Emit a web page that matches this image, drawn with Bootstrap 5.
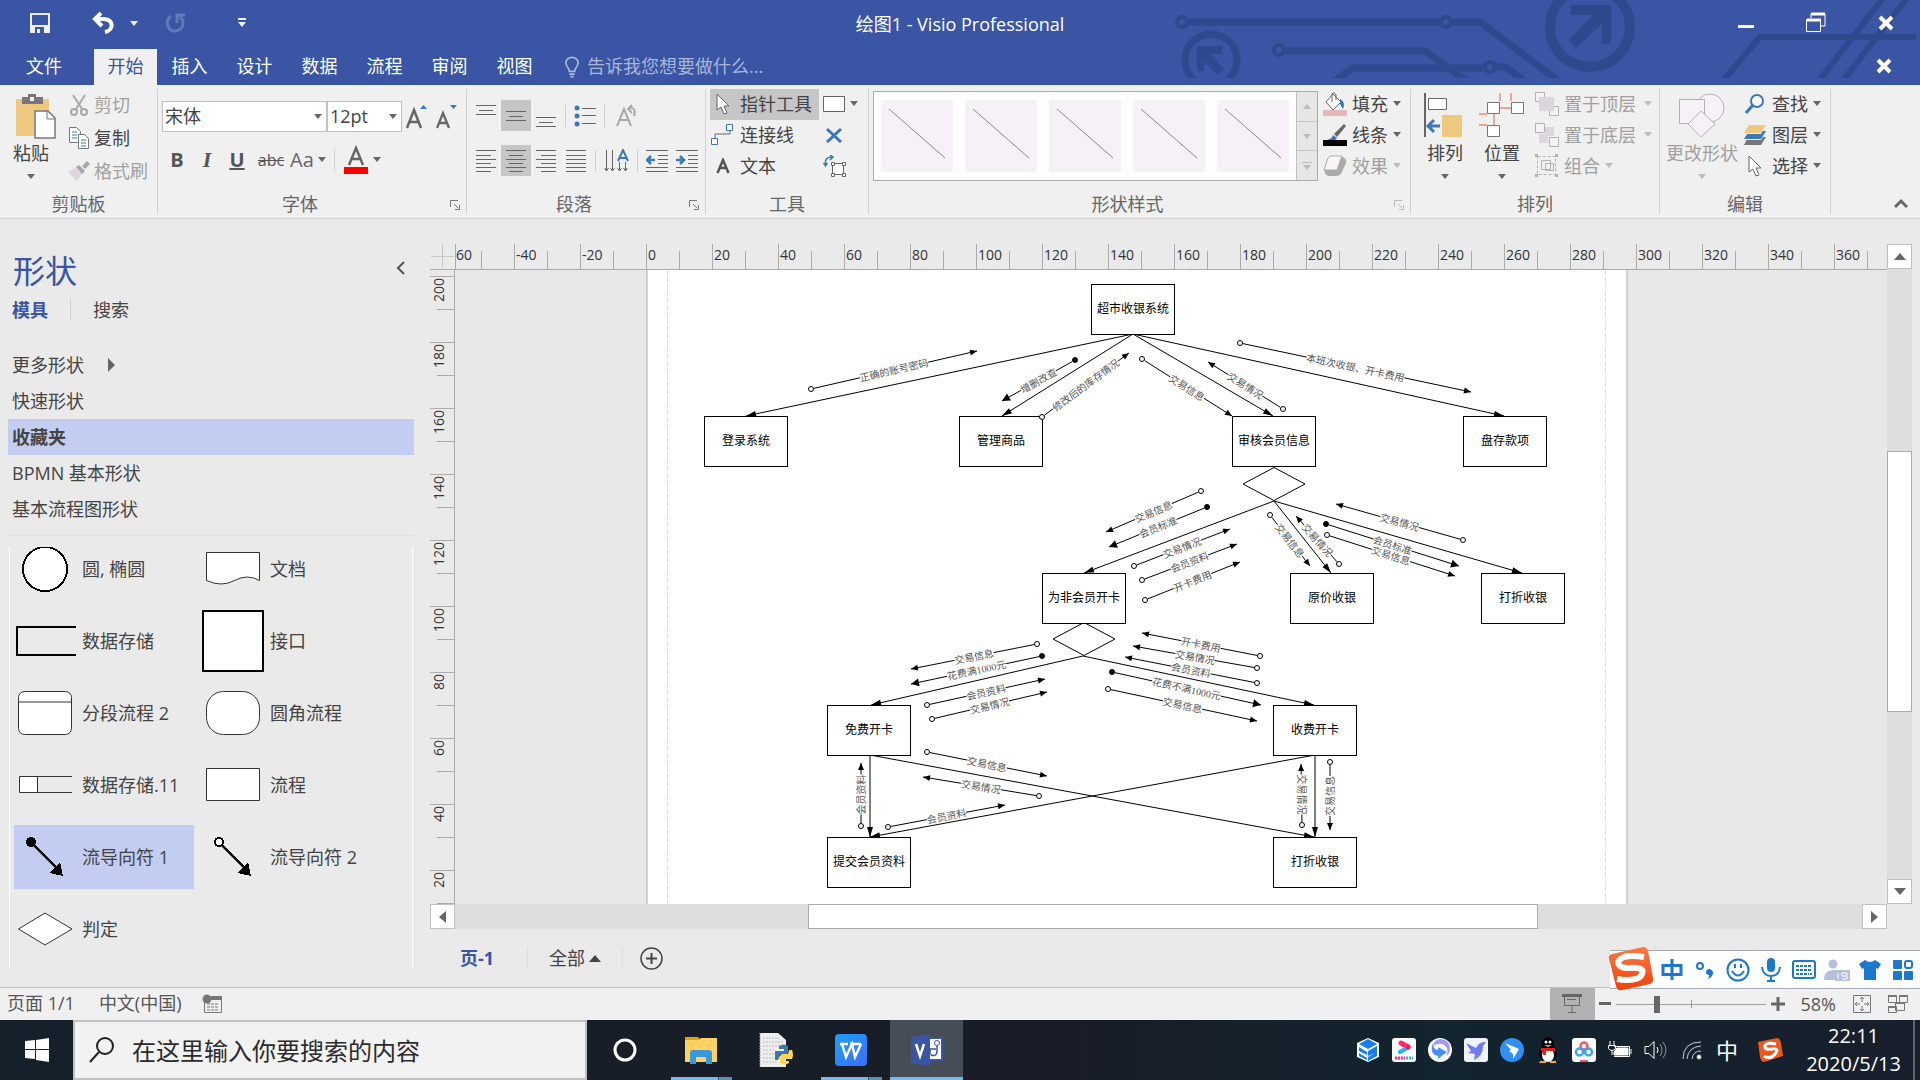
<!DOCTYPE html>
<html lang="zh-CN">
<head>
<meta charset="utf-8">
<meta name="viewport" content="width=device-width, initial-scale=1">
<title>绘图1 - Visio Professional</title>
<link href="https://cdn.jsdelivr.net/npm/bootstrap@5.3.0/dist/css/bootstrap.min.css" rel="stylesheet">
<style>
body{font-family:"Open Sans","Noto Sans CJK SC",sans-serif;font-size:18px;line-height:24px;color:#444;background:#eaeaea}
button{font:inherit;color:inherit;background:none;border:0;padding:0;white-space:nowrap}
svg{display:block;flex:none}
a{color:inherit;text-decoration:none}
.window{height:100vh;min-height:720px}
.minw0{min-width:0}
.minh0{min-height:0}
/* title bar and tabs */
.topband{background:#3955a3;color:#fff}
.deco{right:0;top:0;pointer-events:none}
.titlerow{height:49px}
.wtitle{line-height:18px;padding-top:15px}
.qat{left:30px;top:12px}
.qat .undo{margin-left:42px}
.qat .undo-more{margin-left:16px}
.qat .more{margin-left:52px}
.wbtns{right:26px;top:12px;gap:52px}
.tabrow{height:36px}
.tabrow a{width:65px;text-align:center;line-height:34px;height:36px}
.tabrow a.file-tab{width:88px}
.tabrow a.on{background:#f0f0f0;color:#3955a3;width:63px;margin-left:6px}
.tell{color:#a9b6d8;margin-left:18px}
.tell input{background:none;border:0;color:inherit;width:190px;padding:0 0 2px;outline:0}
.tell input::placeholder{color:#a9b6d8;opacity:1}
/* ribbon */
.ribbon{height:134px;background:#f0f0f0;border-bottom:1px solid #d0d0d0}
.rgroup{position:relative;height:125px;margin-top:4px;border-right:1px solid #d2d2d2;flex:none;display:flex;flex-direction:column}
.rbody{height:102px;flex:none;display:flex}
.rname{text-align:center;color:#666;line-height:27px}
.w-clip{width:158px}.w-font{width:309px}.w-para{width:239px}.w-tool{width:163px}.w-style{width:542px}.w-arr{width:249px}.w-edit{width:171px}
.launch{position:absolute;right:6px;bottom:4px}
.tri{display:inline-block;flex:none;border:4px solid transparent;border-top:5px solid #666;border-bottom:0}
.dim{color:#a0a0a0}
.dim .tri{border-top-color:#bdbdbd}
.cmd{height:31px;display:flex;align-items:center;padding-bottom:2px}
.cmd .ic{width:26px;margin-right:4px;display:flex;justify-content:center}
.cmd .tri{margin-left:5px}
.clip .bigcmd{margin-left:13px}
.clip .cmd{height:33px}
.clip .cmd .ic{width:20px;margin-right:5px}
.toolcol{width:109px}
.hl{background:#c6c6c6}
.bigcmd{display:flex;flex-direction:column;align-items:center;padding-top:4px}
.bigcmd .ic{height:48px}
.bigcmd .tri{margin-top:9px}
.arr .bigcmd{margin-left:13px}
.arr .arrcol{margin-left:9px}
.edit .bigcmd{margin-left:6px}
.rstack{flex-direction:column;padding:12px 0 0 4px;gap:12px}
.para.rstack{padding-top:11px;gap:14px}
.rrow{height:31px;display:flex;align-items:center}
.rrow button{height:31px;display:flex;align-items:center;justify-content:center}
.para button{width:30px}
.para .wide{width:33px}
.fmt{font-size:20px;color:#555}
.fmt button{width:30px}
.fmt .ital{font-family:"Liberation Serif",serif;font-size:22px}
.fmt .strike{font-size:16px;text-decoration:line-through}
.fmt .auto{width:auto;color:#666}
.vsep{width:1px;height:22px;background:#d0d0d0;margin:0 4px;flex:none}
.fsel{border:1px solid #c0c0c0;border-radius:0;height:31px;padding:0 2px;font-size:18px;color:#444;background-color:#fff;background-size:8px 5px;background-position:right 4px center;width:75px;
--bs-form-select-bg-img:url("data:image/svg+xml,%3csvg xmlns='http://www.w3.org/2000/svg' viewBox='0 0 8 5'%3e%3cpath d='M0 0h8L4 5z' fill='%23666'/%3e%3c/svg%3e")}
.fsel.face{width:165px}
.gallery{height:90px;border:1px solid #ababab;background:#fff;padding:0 0 0 7px;margin-top:2px}
.gallery .tile{background:#f5f1f7;width:72px;height:72px;margin-right:12px}
.gscroll{width:21px;background:#e6e6e6;border-left:1px solid #c0c0c0;margin-left:-5px}
.gscroll button{flex:1;border-bottom:1px solid #c8c8c8;display:flex;align-items:center;justify-content:center}
.gscroll button:last-child{border-bottom:0}
/* shapes pane */
.pane{width:430px;flex:none;padding:31px 16px 0 8px}
.pane h1{font-size:32px;line-height:42px;color:#3955a3;margin:0 0 0 5px;font-weight:400}
.pane .fold{padding:0 9px 6px 0}
.ptabs{height:36px;padding-left:4px;margin-bottom:19px}
.ptabs .on{color:#3955a3;font-weight:700}
.ptabs .vsep{margin:0 22px}
.plist{border-bottom:1px solid #dedede;padding-bottom:8px}
.plist a{display:flex;align-items:center;height:36px;padding-left:4px}
.plist a.on,.stencil .on{background:#c2cdf1}
.plist a.on{font-weight:700}
.sten-wrap{border-left:1px solid #fff;border-right:1px solid #fff;overflow:hidden;height:421px;margin:11px 0 0 1px;width:404px}
.stencil{display:grid;grid-template-columns:180px 180px;gap:8px;margin:-10px 0 0 4px}
.stencil button{display:flex;align-items:center;height:64px;text-align:left}
.stencil svg{margin-right:6px}
/* rulers */
.hr-row{height:26px;margin-top:25px}
.corner{width:25px;border-bottom:1px solid #ababab}
.hruler{border-left:1px solid #ababab;border-bottom:1px solid #ababab;overflow:hidden;font-size:14px;line-height:21px;color:#333}
.hruler>div{display:flex;width:1500px}
.hruler span,.vruler span{flex:none;display:block}
.hruler span{width:66px;height:26px;padding-left:2px;background:linear-gradient(#ababab,#ababab) 0 0/1px 100% no-repeat,linear-gradient(#ababab,#ababab) 33px 7px/1px 100% no-repeat}
.hruler span:first-child{width:58px;padding-left:0;background-position:-1px 0,25px 7px}
.vruler{width:25px;border-right:1px solid #ababab;overflow:hidden;font-size:14px;line-height:15px;color:#333;padding-top:6px}
.vruler span{height:66px;padding-top:2px;background:linear-gradient(#ababab,#ababab) 0 0/100% 1px no-repeat,linear-gradient(#ababab,#ababab) 7px 33px/100% 1px no-repeat}
.vruler i{font-style:normal;writing-mode:vertical-rl;transform:rotate(180deg);display:block;margin-left:1px}
.canvas{background:#e8e8e8;overflow:hidden;position:relative;min-width:0;min-height:0}
.canvas svg{width:100%;height:100%;position:absolute;inset:0}
.sbtn{background:#fff;border:1px solid #c0c0c0;width:25px;height:25px;display:flex;align-items:center;justify-content:center;flex:none}
.track{background:#dedede}
.thumb{background:#fff;border:1px solid #ababab}
.vbar{width:25px;margin:25px 8px 0 0;flex:none}
.vbar .gap-a{flex:182}.vbar .thumb{flex:259}.vbar .gap-b{flex:167}
.hbar{margin-right:33px;height:25px}
.hbar .gap-a{flex:353}.hbar .thumb{flex:729}.hbar .gap-b{flex:324}
.pagetabs{height:58px;padding-left:30px;gap:21px}
.pagetabs .vsep{margin:0;background:#ddd}
.pagetabs .cur{color:#3955a3;font-weight:700;padding-right:12px}
.pagetabs .plus{margin-left:-4px}
.node-t{font:12px "Noto Sans CJK SC",sans-serif;fill:#000;text-anchor:middle}
.flow-t{font:10px "Liberation Serif","Noto Sans CJK SC",serif;fill:#555;text-anchor:middle}
/* status bar */
.status{height:33px;background:#f0f0f0;border-top:1px solid #c0c0c0;color:#555;padding:0 12px 0 7px}
.status .present{width:45px;background:#b2b2b2}
.status .labels{line-height:28px;height:31px}
.status .fit{margin:0 17px}
.zoomer{appearance:none;width:150px;height:20px;margin:0 5px;background:linear-gradient(#999,#999) 75px 6px/1px 8px no-repeat,linear-gradient(#a0a0a0,#a0a0a0) 0 10px/100% 1px no-repeat}
.zoomer::-webkit-slider-thumb{appearance:none;width:6px;height:17px;background:#666}
.ime{right:0;bottom:91px;height:39px;width:310px;background:#fff;border-top:1px solid #a5a9b8;border-bottom:1px solid #a5a9b8;padding-left:45px}
.ime .slogo{left:-2px;top:-4px}
.ime button{width:33px;display:flex;justify-content:center;align-items:center}
/* taskbar */
.taskbar{height:60px;background:linear-gradient(90deg,#14202a 0,#191d27 55%,#12242f 75%,#171f2b);color:#fff}
.startb{width:73px;display:flex;align-items:center;justify-content:center}
.tsearch{width:514px;background:#f2f2f2;border:2px solid #c0c0c0;padding-left:14px;gap:17px}
.tsearch input{font-size:24px;border:0;background:none;outline:0;color:#333;padding:0;width:440px}
.tsearch input::placeholder{color:#2b2b2b;opacity:1}
.tapp{width:75px;display:flex;align-items:center;justify-content:center;position:relative;height:60px}
.tapp.home{width:76px}
.run::after{content:"";position:absolute;left:8px;right:6px;bottom:0;height:3px;background:linear-gradient(90deg,#76b9ed 0 47px,#3f5f78 47px 48px,#5a8fb8 48px)}
.act{background:#454e57;width:73px;margin-left:2px}
.act::after{left:0;right:0;background:#76b9ed}
.tray button{width:36px;height:60px;display:flex;align-items:center;justify-content:center}
.tray .lang{width:34px;font-size:22px}
.tray .sogou{width:52px}
.clock{font-size:20px;line-height:28px;width:119px;text-align:center;border-right:2px solid #5d656e;margin-right:5px;padding:2px 2px 0 0}
</style>
<script src="https://cdn.jsdelivr.net/npm/bootstrap@5.3.0/dist/js/bootstrap.bundle.min.js"></script>
</head>
<body class="overflow-hidden">
<div class="window d-flex flex-column">

<header class="topband position-relative flex-shrink-0">
  <svg class="deco position-absolute" width="745" height="78" viewBox="1175 0 745 78" fill="none" stroke="#2f498f" stroke-width="7">
    <circle cx="1182" cy="22" r="5" stroke-width="4"/><path d="M1188 22h252"/><circle cx="1446" cy="22" r="5" stroke-width="4"/><path d="M1453 22h27l80 60"/>
    <circle cx="1279" cy="50" r="5" stroke-width="4"/><path d="M1286 51h139l42 30"/>
    <path d="M1333 82l20-14h130"/><circle cx="1490" cy="67" r="5" stroke-width="4"/><path d="M1496 67h10l18 14"/>
    <circle cx="1211" cy="60" r="26"/><circle cx="1590" cy="27" r="40" stroke-width="10"/>
    <path d="M1722 82l38-45h156M1818 82l68-88M1842 82l68-88" stroke-width="6"/>
    <g fill="#2f498f" stroke="none"><path d="M1197 46h25v8h-12l14 15-7 6-13-14v10h-7z"/><path d="M1571 5h40v39h-9V24l-26 24-7-8 24-25h-22z"/></g>
  </svg>
  <div class="titlerow position-relative">
    <div class="qat position-absolute d-flex align-items-center">
      <button aria-label="保存"><svg width="20" height="21"><path d="M1 1h18v18H1z" fill="none" stroke="#f0f0f0" stroke-width="2"/><path d="M1 12h18v8H1z" fill="#f0f0f0"/><path d="M5 14h9v6H5z" fill="#3955a3"/><path d="M7 16h3v4H7z" fill="#f0f0f0"/></svg></button>
      <button class="undo" aria-label="撤消"><svg width="22" height="22" viewBox="0 0 22 22"><path d="M9 1L3 7l7 7M3 7h9c10 1 10 11 1 13" fill="none" stroke="#fff" stroke-width="4"/></svg></button>
      <button class="undo-more" aria-label="撤消历史"><svg width="8" height="5"><path d="M0 0h8L4 5z" fill="#f0f0f0"/></svg></button>
      <button class="ms-4" aria-label="恢复"><svg width="24" height="22" viewBox="0 0 24 22"><path d="M9 4c-7 5-3 16 5 15 9-2 8-11 4-14M15 11V3h8" fill="none" stroke="#6379b8" stroke-width="3"/></svg></button>
      <button class="more" aria-label="自定义快速访问工具栏"><svg width="8" height="10"><path d="M0 0h8v2H0zM0 4h8L4 9z" fill="#f0f0f0"/></svg></button>
    </div>
    <div class="wtitle text-center">绘图1 - Visio Professional</div>
    <div class="wbtns position-absolute d-flex align-items-center">
      <button aria-label="最小化"><svg width="16" height="20"><path d="M0 12h16v3H0z" fill="#fff"/></svg></button>
      <button aria-label="还原"><svg width="20" height="21" fill="none" stroke="#fff"><path d="M5 6V2h14v12h-4"/><path d="M5 2h14M1 8h14" stroke-width="3"/><path d="M.5 7.500h14v12H.5z"/></svg></button>
      <button aria-label="关闭"><svg width="16" height="16"><path d="M2 2l12 12M14 2L2 14" stroke="#fff" stroke-width="4"/></svg></button>
    </div>
  </div>
  <nav class="tabrow d-flex align-items-start position-relative">
    <a href="#" class="file-tab">文件</a><a href="#" class="on">开始</a><a href="#">插入</a><a href="#">设计</a><a href="#">数据</a><a href="#">流程</a><a href="#">审阅</a><a href="#">视图</a>
    <label class="tell d-flex align-items-center h-100"><svg width="14" height="24" viewBox="0 0 16 24" class="me-2" fill="none" stroke="#a9b6d8" stroke-width="2"><path d="M5 17c0-4-4-5-4-10a7 6 0 0 1 14 0c0 5-4 6-4 10zM5 20h6M6 23h4"/></svg><input type="text" placeholder="告诉我您想要做什么..." aria-label="告诉我您想要做什么"></label>
    <button class="ms-auto me-4 pt-2 pe-1" aria-label="关闭文档"><svg width="18" height="18"><path d="M4 3l12 12M16 3L4 15" stroke="#fff" stroke-width="4"/></svg></button>
  </nav>
</header>

<section class="ribbon d-flex flex-shrink-0 position-relative" aria-label="开始">
  <div class="rgroup w-clip"><div class="rbody clip">
    <button class="bigcmd"><span class="ic"><svg width="42" height="46" viewBox="0 0 42 46"><path d="M2 6h33v37H2z" fill="#edc87e"/><path d="M8 4h6V1h8v3h7v7H8z" fill="#777"/><path d="M16 4h4v4h-4z" fill="#f0f0f0"/><path d="M21 18h13l7 7v20H21z" fill="#fff" stroke="#777" stroke-width="1.500"/><path d="M33 18v8h8" fill="none" stroke="#777"/></svg></span><span class="pe-2">粘贴</span><i class="tri me-2"></i></button>
    <div class="ms-2 ps-1">
      <button class="cmd dim"><span class="ic"><svg width="20" height="22" fill="none" stroke="#a8a8a8" stroke-width="2"><path d="M4 1l9 14M16 1L7 15"/><circle cx="5" cy="18" r="3"/><circle cx="15" cy="18" r="3"/></svg></span>剪切</button>
      <button class="cmd"><span class="ic"><svg width="20" height="22" fill="#fff" stroke="#777"><path d="M.5 .5h7l4 4v11H.5z"/><path d="M9.500 7.500h6l4 4v10h-10z"/><path d="M3 5h5M3 8h5M3 11h5M12 13h5M12 16h5M12 19h5" stroke="#3b78b5"/></svg></span>复制</button>
      <button class="cmd dim"><span class="ic"><svg width="22" height="20"><path d="M0 11l7-4 7 5-5 8z" fill="#dcd5dc"/><path d="M8 6l3-2 6 6-3 3zM14 5l5-5 3 3-5 5z" fill="#a8a8a8"/></svg></span>格式刷</button>
    </div></div><div class="rname">剪贴板</div></div>

  <div class="rgroup w-font"><div class="rbody rstack">
    <div class="rrow">
      <select class="form-select fsel face" aria-label="字体"><option>宋体</option></select><select class="form-select fsel" aria-label="字号"><option>12pt</option></select>
      <button class="ms-1" aria-label="增大字号"><svg width="22" height="26" viewBox="0 0 22 26"><path d="M1 24L8 6l7 18M4 18h8" fill="none" stroke="#666" stroke-width="2.500"/><path d="M14 5h7l-3.500-4z" fill="#3b78b5"/></svg></button>
      <button class="ms-2" aria-label="减小字号"><svg width="22" height="26" viewBox="0 0 22 26"><path d="M1 24L7 9l6 15M3 19h8" fill="none" stroke="#666" stroke-width="2.300"/><path d="M14 1h7l-3.500 4z" fill="#3b78b5"/></svg></button>
    </div>
    <div class="rrow fmt">
      <button class="fw-bold">B</button><button class="ital fw-bold fst-italic">I</button><button class="fw-bold text-decoration-underline">U</button><button class="strike ms-1">abc</button><button class="auto ms-1">Aa<i class="tri ms-1"></i></button><span class="vsep ms-2"></span>
      <button class="auto ms-1" aria-label="字体颜色"><svg width="26" height="30" viewBox="0 0 26 30"><path d="M6 20l7-17 7 17M8 14h10" fill="none" stroke="#666" stroke-width="2.500"/><path d="M1 22h24v7H1z" fill="red"/></svg><i class="tri ms-1"></i></button>
    </div></div><div class="rname pe-4">字体</div>
    <button class="launch" aria-label="字体设置"><svg width="10" height="10" fill="none" stroke="#777"><path d="M.5 7V.5H8M4 4l4 4M9.500 5v4.500H5"/></svg></button></div>

  <div class="rgroup w-para"><div class="rbody para rstack">
    <div class="rrow">
      <button aria-label="顶端对齐"><svg width="20" height="24" stroke="#666"><path d="M0 1.500h20M3 6.500h14M0 10.500h20"/></svg></button>
      <button class="hl" aria-label="中部对齐"><svg width="20" height="24" stroke="#666"><path d="M0 7.500h20M3 12.500h14M0 16.500h20"/></svg></button>
      <button aria-label="底端对齐"><svg width="20" height="24" stroke="#666"><path d="M0 13.500h20M3 18.500h14M0 22.500h20"/></svg></button>
      <span class="vsep"></span>
      <button aria-label="项目符号"><svg width="22" height="24" stroke="#666"><path d="M8 4.500h14M8 11.500h14M8 19.500h14"/><g fill="#3b78b5" stroke="none"><circle cx="3" cy="4" r="2.500"/><circle cx="3" cy="12" r="2.500"/><circle cx="3" cy="20" r="2.500"/></g></svg></button>
      <span class="vsep"></span>
      <button class="wide" aria-label="旋转文字"><svg width="22" height="24" fill="none" stroke="#aaa" stroke-width="2"><path d="M2 22L9 5l7 17M5 16h8M14 5c5-3 7 2 5 7M17 1l-4 4 4 4"/></svg></button>
    </div>
    <div class="rrow">
      <button aria-label="左对齐"><svg width="20" height="22" stroke="#666"><path d="M0 .5h20M0 5.500h15M0 9.500h20M0 13.500h15M0 17.500h20M0 21.500h15"/></svg></button>
      <button class="hl" aria-label="居中"><svg width="20" height="22" stroke="#666"><path d="M0 .5h20M3 5.500h14M0 9.500h20M3 13.500h14M0 17.500h20M3 21.500h14"/></svg></button>
      <button aria-label="右对齐"><svg width="20" height="22" stroke="#666"><path d="M0 .5h20M5 5.500h15M0 9.500h20M5 13.500h15M0 17.500h20M5 21.500h15"/></svg></button>
      <button aria-label="两端对齐"><svg width="20" height="22" stroke="#666"><path d="M0 .5h20M0 5.500h20M0 9.500h20M0 13.500h20M0 17.500h20M0 21.500h20"/></svg></button>
      <span class="vsep"></span>
      <button class="wide" aria-label="文字方向"><svg width="25" height="24" fill="none" stroke="#666"><path d="M2.500 1v21M8.500 1v21M15.500 13v9M21.500 13v9M.5 19l2 3 2-3M6.500 19l2 3 2-3M13.500 19l2 3 2-3M19.500 19l2 3 2-3"/><path d="M14 12l5-11 5 11M15 9h8" stroke="#3b78b5" stroke-width="2"/></svg></button>
      <span class="vsep"></span>
      <button aria-label="减少缩进"><svg width="22" height="22" stroke="#666"><path d="M0 .5h22M12 5.500h10M12 9.500h10M12 13.500h10M0 17.500h22M0 21.500h22"/><path d="M9 10H2M5 6l-4 4 4 4" fill="none" stroke="#3b78b5" stroke-width="2.500"/></svg></button>
      <button aria-label="增加缩进"><svg width="22" height="22" stroke="#666"><path d="M0 .5h22M12 5.500h10M12 9.500h10M12 13.500h10M0 17.500h22M0 21.500h22"/><path d="M0 10h7M4 6l4 4-4 4" fill="none" stroke="#3b78b5" stroke-width="2.500"/></svg></button>
    </div></div><div class="rname pe-4">段落</div>
    <button class="launch" aria-label="段落设置"><svg width="10" height="10" fill="none" stroke="#777"><path d="M.5 7V.5H8M4 4l4 4M9.500 5v4.500H5"/></svg></button></div>

  <div class="rgroup w-tool"><div class="rbody ps-1">
    <div class="toolcol">
      <button class="cmd hl w-100"><span class="ic"><svg width="14" height="22"><path d="M1 1v16l4-3 3 7 3-1-3-7h5z" fill="#fff" stroke="#666"/></svg></span>指针工具</button>
      <button class="cmd"><span class="ic"><svg width="24" height="22" fill="#fff" stroke="#3b78b5"><path d="M4 14v-4h15V7" fill="none" stroke="#666"/><path d="M.5 14.500h6v6h-6zM15.500 .5h6v6h-6z"/></svg></span>连接线</button>
      <button class="cmd"><span class="ic"><svg width="14" height="16"><path d="M1.500 15L7 2l5.500 13M3 10h8" fill="none" stroke="#555" stroke-width="2.500"/></svg></span>文本</button>
    </div>
    <div class="ms-1">
      <button class="cmd" aria-label="矩形"><svg width="22" height="16"><path d="M.5 .5h21v15H.5z" fill="#fff" stroke="#666"/></svg><i class="tri"></i></button>
      <button class="cmd" aria-label="连接点"><svg width="22" height="16"><path d="M4 2l14 13M18 2L4 15" stroke="#3b78b5" stroke-width="3"/></svg></button>
      <button class="cmd" aria-label="文本块"><svg width="23" height="22" fill="none" stroke="#666"><path d="M9.500 8.500h11v11h-11z" fill="#fff"/><path d="M8.500 7.500h3v3h-3zM19.500 7.500h3v3h-3zM8.500 18.500h3v3h-3zM19.500 18.500h3v3h-3z" fill="#fff"/><path d="M2.500 11V6q1-4 7-4M.5 8l2 3 2-3M7 0l3 2-3 3" stroke="#3b78b5" stroke-width="1.500"/></svg></button>
    </div></div><div class="rname">工具</div></div>

  <div class="rgroup w-style"><div class="rbody ps-1">
    <div class="gallery d-flex align-items-center">
      <button class="tile" aria-label="样式 1"><svg width="72" height="72"><path d="M8 9l56 49" stroke="#888"/></svg></button><button class="tile" aria-label="样式 2"><svg width="72" height="72"><path d="M8 9l56 49" stroke="#888"/></svg></button><button class="tile" aria-label="样式 3"><svg width="72" height="72"><path d="M8 9l56 49" stroke="#888"/></svg></button><button class="tile" aria-label="样式 4"><svg width="72" height="72"><path d="M8 9l56 49" stroke="#888"/></svg></button><button class="tile" aria-label="样式 5"><svg width="72" height="72"><path d="M8 9l56 49" stroke="#888"/></svg></button>
      <div class="gscroll d-flex flex-column h-100">
        <button aria-label="上一行"><svg width="8" height="5"><path d="M0 5h8L4 0z" fill="#bbb"/></svg></button><button aria-label="下一行"><svg width="8" height="5"><path d="M0 0h8L4 5z" fill="#bbb"/></svg></button><button aria-label="其他"><svg width="10" height="8"><path d="M0 0h10v1H0zM1 3h8L5 8z" fill="#bbb"/></svg></button>
      </div>
    </div>
    <div class="ms-1">
      <button class="cmd"><span class="ic"><svg width="24" height="24"><path d="M10 2l8 8-8 8-7-8z" fill="#fff" stroke="#666"/><path d="M9 10V2q2-3 4 1v5" fill="none" stroke="#666"/><path d="M17 7q6 3 3 10l-3-5z" fill="#3b78b5"/><path d="M0 18h24v6H0z" fill="#e6b8b7"/></svg></span>填充<i class="tri"></i></button>
      <button class="cmd"><span class="ic"><svg width="24" height="24"><path d="M21 1l2 2-9 11-3-3z" fill="#666"/><path d="M4 17q5-1 6-5l4 3q-2 4-10 2z" fill="#3b78b5"/><path d="M0 17h24v6H0z"/></svg></span>线条<i class="tri"></i></button>
      <button class="cmd dim"><span class="ic"><svg width="24" height="22"><path d="M9 2h11q4 2 3 6l-4 9q-2 4-6 4H5q-6-4-2-8z" fill="#aaa"/><path d="M8 1h11l-5 14H1L5 3q1-2 3-2z" fill="#f8f4f8" stroke="#aaa" stroke-linejoin="round"/></svg></span>效果<i class="tri"></i></button>
    </div></div><div class="rname pe-4">形状样式</div>
    <button class="launch" aria-label="形状样式设置"><svg width="10" height="10" fill="none" stroke="#bbb"><path d="M.5 7V.5H8M4 4l4 4M9.500 5v4.500H5"/></svg></button></div>

  <div class="rgroup w-arr"><div class="rbody arr">
    <button class="bigcmd"><span class="ic"><svg width="42" height="46"><path d="M1 0v44" stroke="#666" stroke-width="2"/><path d="M4.500 5.500h18v11h-18z" fill="#fff" stroke="#666"/><path d="M18 22h20v22H18z" fill="#edc87e"/><path d="M16 33H5M10 27l-6 6 6 6" fill="none" stroke="#3b78b5" stroke-width="3"/></svg></span><span>排列</span><i class="tri"></i></button>
    <button class="bigcmd"><span class="ic"><svg width="46" height="46" fill="#fff" stroke="#777"><path d="M21 0v8M32 0v8M20 15h12M0 21h8M0 32h8M15 21v12" stroke="#e0603c"/><path d="M8.500 9.500h12v11h-12zM32.500 9.500h12v11h-12zM8.500 32.500h12v11h-12z"/></svg></span><span>位置</span><i class="tri"></i></button>
    <div class="arrcol">
      <button class="cmd dim"><span class="ic"><svg width="24" height="24"><path d="M.5 .5h9v9h-9zM14.500 14.500h9v9h-9z" fill="#f5f1f7" stroke="#b5b0b5"/><path d="M4 5h15v14H4z" fill="#dcd5dc"/></svg></span>置于顶层<i class="tri ms-2"></i></button>
      <button class="cmd dim"><span class="ic"><svg width="24" height="24"><path d="M10 4h9v9h-9zM4 11h9v9H4z" fill="#dcd5dc"/><path d="M.5 .5h9v9h-9zM14.500 14.500h9v9h-9z" fill="#f5f1f7" stroke="#b5b0b5"/></svg></span>置于底层<i class="tri ms-2"></i></button>
      <button class="cmd dim"><span class="ic"><svg width="24" height="24" fill="none" stroke="#b5b0b5"><path d="M2.500 2.500h18v18h-18z" stroke-dasharray="3 2"/><path d="M6.500 6.500h9v9h-9zM10.500 9.500h8v7h-8z"/><path d="M0 0h3v3H0zM20 0h3v3h-3zM0 20h3v3H0zM20 20h3v3h-3z" fill="#b5b0b5" stroke="none"/></svg></span>组合<i class="tri"></i></button>
    </div></div><div class="rname">排列</div></div>

  <div class="rgroup w-edit"><div class="rbody edit">
    <button class="bigcmd dim"><span class="ic"><svg width="46" height="46" fill="#f5f1f7" stroke="#b5b0b5"><circle cx="31" cy="15" r="14"/><path d="M.5 6.500h25v24H.5z"/><path d="M22 18l14 13-14 13L9 31z"/></svg></span><span>更改形状</span><i class="tri"></i></button>
    <div class="ms-1">
      <button class="cmd"><span class="ic"><svg width="20" height="20"><circle cx="12" cy="7" r="6" fill="#fff" stroke="#3b78b5" stroke-width="2"/><path d="M8 11l-7 8" stroke="#3b78b5" stroke-width="3"/></svg></span>查找<i class="tri"></i></button>
      <button class="cmd"><span class="ic"><svg width="22" height="20"><path d="M4 12h18l-5 8H0z" fill="#777"/><path d="M5 6h17l-5 9H0z" fill="#f0f0f0"/><path d="M5 6h17l-5 8H0z" fill="#3b78b5"/><path d="M5 0h17l-5 9H0z" fill="#f0f0f0"/><path d="M5 0h17l-5 8H0z" fill="#edc87e"/></svg></span>图层<i class="tri"></i></button>
      <button class="cmd"><span class="ic"><svg width="14" height="22"><path d="M1 1v16l4-3 3 7 3-1-3-7h5z" fill="#fff" stroke="#666"/></svg></span>选择<i class="tri"></i></button>
    </div></div><div class="rname">编辑</div></div>
  <button class="ms-auto align-self-end me-2 pe-1 pb-1" aria-label="折叠功能区"><svg width="14" height="18"><path d="M1 11l6-6 6 6" fill="none" stroke="#666" stroke-width="3"/></svg></button>
</section>

<main class="d-flex flex-grow-1 minh0">
  <aside class="pane">
    <div class="d-flex align-items-center justify-content-between"><h1>形状</h1><button class="fold" aria-label="折叠"><svg width="9" height="14"><path d="M8 1L2 7l6 6" fill="none" stroke="#555" stroke-width="2"/></svg></button></div>
    <div class="ptabs d-flex align-items-center"><a href="#" class="on">模具</a><span class="vsep"></span><a href="#">搜索</a></div>
    <nav class="plist">
      <a href="#">更多形状<svg width="7" height="14" class="ms-4"><path d="M0 0l7 7-7 7z" fill="#666"/></svg></a><a href="#">快速形状</a><a href="#" class="on">收藏夹</a><a href="#">BPMN 基本形状</a><a href="#">基本流程图形状</a>
    </nav>
    <div class="sten-wrap"><div class="stencil">
      <button><svg width="62" height="64"><circle cx="31" cy="32" r="22" fill="#fff" stroke="#000" stroke-width="2" shape-rendering="crispEdges"/></svg>圆, 椭圆</button>
      <button><svg width="62" height="64"><path d="M4.500 15.500h53v28q-12-7-25 0t-28 0z" fill="#fff" stroke="#333"/></svg>文档</button>
      <button><svg width="62" height="64"><path d="M64 18H3v28h59" fill="none" stroke="#000" stroke-width="2"/></svg>数据存储</button>
      <button><svg width="62" height="64"><path d="M1 2h60v60H1z" fill="#fff" stroke="#000" stroke-width="2"/></svg>接口</button>
      <button><svg width="62" height="64"><rect x="4.500" y="10.500" width="53" height="43" rx="6" fill="#fff" stroke="#333"/><path d="M5 21h53" stroke="#333"/></svg>分段流程 2</button>
      <button><svg width="62" height="64"><rect x="4.500" y="10.500" width="53" height="43" rx="17" fill="#fff" stroke="#333"/></svg>圆角流程</button>
      <button><svg width="62" height="64"><path d="M5 23.500h18v16H5z" fill="#fff"/><path d="M58 23.500H5.500v16H58M23.500 23v16" fill="none" stroke="#333"/></svg>数据存储.11</button>
      <button><svg width="62" height="64"><path d="M4.500 15.500h53v32h-53z" fill="#fff" stroke="#333"/></svg>流程</button>
      <button class="on"><svg width="62" height="64" shape-rendering="crispEdges"><path d="M17 18l28 28" stroke="#777" stroke-width="2"/><path d="M17 17l28 28" stroke="#000" stroke-width="2"/><circle cx="17" cy="17" r="5"/><path d="M49 51l-13-3 10-11z"/></svg>流导向符 1</button>
      <button><svg width="62" height="64" shape-rendering="crispEdges"><path d="M17 18l28 28" stroke="#777" stroke-width="2"/><path d="M17 17l28 28" stroke="#000" stroke-width="2"/><circle cx="17" cy="17" r="4" fill="#fff" stroke="#000" stroke-width="2"/><path d="M49 51l-13-3 10-11z"/></svg>流导向符 2</button>
      <button><svg width="62" height="64"><path d="M4.500 32L31 16l27 16-27 16z" fill="#fff" stroke="#333"/></svg>判定</button>
    </div></div>
  </aside>

  <div class="flex-grow-1 d-flex flex-column minw0">
    <div class="d-flex flex-grow-1 minh0">
      <div class="flex-grow-1 d-flex flex-column minw0">
        <div class="d-flex hr-row flex-shrink-0"><div class="corner flex-shrink-0"><svg width="25" height="25" stroke="#c8c8c8"><path d="M12.500 0v24M1 12.500h23"/></svg></div><div class="hruler flex-grow-1 minw0"><div id="hr"></div></div></div>
        <div class="d-flex flex-grow-1 minh0">
          <div class="vruler flex-shrink-0" id="vr"></div>
          <div class="canvas flex-grow-1"><svg><g transform="translate(-455 -270)">
            <path d="M647 260h980v700H647z" fill="#fff" stroke="#a5adb5"/>
            <path d="M667.500 270v700M1605.500 270v700" stroke="#ddd" stroke-dasharray="5 2"/>
            <g id="dia"></g></g></svg></div>
        </div>
      </div>
      <div class="vbar d-flex flex-column">
        <button class="sbtn" aria-label="向上滚动"><svg width="12" height="7"><path d="M0 7h12L6 0z" fill="#666"/></svg></button>
        <div class="track flex-grow-1 d-flex flex-column"><div class="gap-a"></div><div class="thumb"></div><div class="gap-b"></div></div>
        <button class="sbtn" aria-label="向下滚动"><svg width="12" height="7"><path d="M0 0h12L6 7z" fill="#666"/></svg></button>
      </div>
    </div>
    <div class="hbar d-flex flex-shrink-0">
      <button class="sbtn" aria-label="向左滚动"><svg width="7" height="12"><path d="M7 0v12L0 6z" fill="#666"/></svg></button>
      <div class="track flex-grow-1 d-flex"><div class="gap-a"></div><div class="thumb"></div><div class="gap-b"></div></div>
      <button class="sbtn" aria-label="向右滚动"><svg width="7" height="12"><path d="M0 0v12l7-6z" fill="#666"/></svg></button>
    </div>
    <div class="pagetabs d-flex align-items-center flex-shrink-0">
      <a href="#" class="cur">页-1</a><span class="vsep"></span><button class="d-flex align-items-center">全部<svg width="12" height="7" class="ms-1"><path d="M0 7h12L6 0z" fill="#444"/></svg></button><span class="vsep"></span>
      <button class="plus" aria-label="插入页"><svg width="23" height="23" fill="none" stroke="#444" stroke-width="1.500"><circle cx="11.500" cy="11.500" r="10.500"/><path d="M11.500 6v11M6 11.500h11" stroke-width="2"/></svg></button>
    </div>
  </div>
</main>

<footer class="status d-flex align-items-center flex-shrink-0">
  <span class="labels">页面 1/1</span><span class="labels ms-4">中文(中国)</span>
  <button class="ms-3 ps-1" aria-label="宏"><svg width="21" height="20"><path d="M2.500 4v14.500h17V4" fill="none" stroke="#777"/><path d="M9 2h11v4H9z" fill="#777"/><circle cx="5" cy="5" r="4.500" fill="#777"/><path d="M5 10h12M5 13h12M5 16h12" stroke="#777" stroke-dasharray="3 1"/></svg></button>
  <button class="present ms-auto h-100 d-flex align-items-center justify-content-center" aria-label="演示模式"><svg width="20" height="20" fill="none" stroke="#666"><path d="M0 1.500h20" stroke-width="3"/><path d="M2.500 2v9.500h15V2M5 5.500h9M10 12v6M6 18.500h8"/></svg></button>
  <button class="ms-1" aria-label="缩小"><svg width="12" height="4"><path d="M0 0h12v3H0z" fill="#666"/></svg></button>
  <input type="range" class="zoomer" min="0" max="100" value="27" aria-label="缩放">
  <button aria-label="放大"><svg width="14" height="14"><path d="M7 0v14M0 7h14" stroke="#666" stroke-width="3"/></svg></button>
  <button class="labels ms-3">58%</button>
  <button class="fit" aria-label="适应窗口"><svg width="18" height="18" fill="none" stroke="#777"><path d="M.5 .5h17v17H.5zM9 2v5M9 11v5M2 9h5M11 9h5M7 4l2-2 2 2M7 14l2 2 2-2M4 7L2 9l2 2M14 7l2 2-2 2"/></svg></button>
  <button aria-label="切换窗口"><svg width="20" height="18" fill="#f0f0f0" stroke="#777"><path d="M.5 .5h8v7h-8zM11.500 .5h8v7h-8zM.5 11.500h8v6h-8zM7.500 7.500h9v8h-9z"/><path d="M0 1h9M11 1h9M7 8h10M0 12h7" stroke-width="2"/></svg></button>
</footer>

<footer class="taskbar d-flex flex-shrink-0">
  <button class="startb" aria-label="开始"><svg width="24" height="24" fill="#fff"><path d="M0 3l10-1v9H0zM11 2l13-2v11H11zM0 12h10v9L0 20zM11 12h13v12l-13-2z"/></svg></button>
  <label class="tsearch d-flex align-items-center flex-shrink-0"><svg width="26" height="26" fill="none" stroke="#222" stroke-width="2"><circle cx="16" cy="9" r="8"/><path d="M10 15L1 25"/></svg><input type="text" placeholder="在这里输入你要搜索的内容" aria-label="搜索"></label>
  <button class="tapp home" aria-label="Cortana"><svg width="24" height="24"><circle cx="12" cy="12" r="10" fill="none" stroke="#fff" stroke-width="3"/></svg></button>
  <button class="tapp run" aria-label="文件资源管理器"><svg width="32" height="28"><path d="M0 1h13l3 3H0z" fill="#e5a00d"/><path d="M0 4h14l2-2h16v24H0z" fill="#ffd263"/><path d="M5 28V17q0-3 3-3h16q3 0 3 3v11h-6v-7H11v7z" fill="#3a97dd"/></svg></button>
  <button class="tapp" aria-label="Python"><svg width="34" height="36"><path d="M1 1h18l8 7v27H1z" fill="#eee"/><path d="M4 6h16M4 10h20M4 14h20M4 18h12M4 22h12M4 26h14M4 30h14" stroke="#bbb" stroke-dasharray="2 1"/><path d="M1 1v34" stroke="#999" stroke-dasharray="2 1"/><path d="M20 14q5-3 9 0v7l-3 3h-5l-2 4h-3v-9h9v-2h-5z" fill="#3c77a9"/><path d="M30 18h3q2 5 0 9h-8v2h5v2q-5 3-9 0v-6l2-3h6z" fill="#ffd54a"/></svg></button>
  <button class="tapp run" aria-label="WPS"><svg width="32" height="32"><defs><linearGradient id="wg" x2="1" y2="1"><stop stop-color="#1ea0fb"/><stop offset="1" stop-color="#3a6df5"/></linearGradient></defs><rect width="32" height="32" rx="4" fill="url(#wg)"/><path d="M5 10h8M7 10l4 13 6-13 3 13 6-13M15 10h11" fill="none" stroke="#fff" stroke-width="2.500"/></svg></button>
  <button class="tapp run act" aria-label="Visio"><svg width="32" height="32"><path d="M16 4h15v22H16z" fill="#fff" stroke="#3955a3" stroke-width="2"/><path d="M19 21v-6h6M20 21q6 2 6-4v-5" fill="none" stroke="#3955a3" stroke-width="1.500"/><circle cx="26" cy="9" r="2.500" fill="none" stroke="#3955a3"/><path d="M0 3l19-3v32L0 29z" fill="#3955a3"/><path d="M5 10l4 12 4-12" fill="none" stroke="#fff" stroke-width="2.500"/></svg></button>
  <div class="tray d-flex ms-auto">
    <button aria-label="方块"><svg width="22" height="24"><path d="M11 0l11 5v14l-11 5-11-5V5z" fill="#fff"/><path d="M11 1l9 5-9 5-9-5zM20 8v10l-9 5v-4l7-4-7 3v-5z" fill="#147df5"/><path d="M2 9l8 5v3l-8-4zM2 15l8 5v2l-8-4z" fill="#147df5"/></svg></button>
    <button aria-label="优酷"><svg width="24" height="24"><rect width="24" height="24" rx="3" fill="#fff"/><path d="M9 5l7 4" stroke="#ff2a6a" stroke-width="5" stroke-linecap="round"/><path d="M8 14l7-4" stroke="#16b5f5" stroke-width="4" stroke-linecap="round"/><circle cx="16" cy="9" r="2.500" fill="#f0206a"/><path d="M3 20h10" stroke="#ff2a8a" stroke-width="3" stroke-dasharray="2 1"/><path d="M14 20h7" stroke="#2ab8f0" stroke-width="3" stroke-dasharray="2 1"/></svg></button>
    <button aria-label="浏览器"><svg width="24" height="24"><circle cx="12" cy="12" r="12" fill="#fff"/><path d="M5 5Q1 16 10 18v3l9-7-9-5v3Q5 12 5 5z" fill="#4a90f2"/><path d="M5 8q1-7 8-7 9 1 9 10 0 5-4 7 3-5 0-9-4-6-13-1z" fill="#a49cf3"/></svg></button>
    <button aria-label="迅雷"><svg width="24" height="24"><rect width="24" height="24" rx="3" fill="#f0f2ff"/><path d="M2 5l10 5q3-7 10-6l-3 4q0 10-9 14l1-6-7-1 3-2z" fill="#6f7cf0"/></svg></button>
    <button aria-label="钉钉"><svg width="24" height="24"><circle cx="12" cy="12" r="12" fill="#2f90f5"/><path d="M5 5l14 6-6 10v-5l-4-3 2-1z" fill="#fff"/></svg></button>
    <button aria-label="QQ"><svg width="20" height="26"><path d="M2 24h6v2H1zM12 24h6v2h-6z" fill="#f5a623"/><ellipse cx="10" cy="16" rx="9" ry="8"/><ellipse cx="10" cy="18" rx="6" ry="7" fill="#fff"/><ellipse cx="10" cy="7" rx="6" ry="7"/><circle cx="8" cy="5" r="1.500" fill="#fff"/><circle cx="12" cy="5" r="1.500" fill="#fff"/><path d="M6 8h8l-4 2z" fill="#f5a623"/><path d="M3 11h14v3H8v4H5v-4H3z" fill="#e02020"/></svg></button>
    <button aria-label="网盘"><svg width="24" height="24"><rect width="24" height="24" rx="3" fill="#fff"/><g fill="none" stroke-width="2.500"><circle cx="12" cy="8" r="3.500" stroke="#ef5a6a"/><circle cx="7.500" cy="14" r="3.500" stroke="#37a7f0"/><circle cx="16.500" cy="14" r="3.500" stroke="#37a7f0"/></g><path d="M8 23h8" stroke="#ef5a6a" stroke-width="2"/></svg></button>
    <button aria-label="电源"><svg width="24" height="18" fill="none" stroke="#fff"><path d="M2 0v4M6 0v4M.5 4.500h7v3q-4 4-7 0zM4 9v5" /><path d="M6 5.500h15.500v10H6" /><path d="M9 7h11v7H6v-3z" fill="#fff"/><path d="M23 8v5"/></svg></button>
    <button aria-label="音量"><svg width="24" height="20" fill="none" stroke="#fff"><path d="M1 6.500h4l5-5v17l-5-5H1z"/><path d="M13 7q2 3 0 6"/><path d="M16 4q4 6 0 12M19 2q6 8 0 16" stroke="#8b9197"/></svg></button>
    <button aria-label="网络"><svg width="20" height="20" fill="none" stroke="#c8ccd0"><path d="M1 19Q1 2 19 2M5 19Q6 7 19 6M10 19q1-8 9-8"/><circle cx="17" cy="17" r="2" fill="#fff"/></svg></button>
    <button class="lang">中</button>
    <button class="sogou" aria-label="搜狗输入法"><svg width="26" height="24"><path d="M1 4l19-4q3 0 4 5l2 13-19 6q-3 0-4-5z" fill="#f2571c"/><path d="M19 6q-10-2-11 2t7 3 3 5-11 2" fill="none" stroke="#fff" stroke-width="3"/></svg></button>
  </div>
  <div class="clock"><div>22:11</div><div>2020/5/13</div></div>
</footer>

<div class="ime position-absolute d-flex">
  <svg class="slogo position-absolute" width="46" height="44" viewBox="0 0 46 44"><defs><linearGradient id="sg" x2="0" y2="1"><stop stop-color="#fb7a44"/><stop offset="1" stop-color="#ee4208"/></linearGradient></defs><path d="M4 7l31-7q4 0 5 4l5 27q1 4-3 6L14 43q-5 1-6-4L1 12q-1-4 3-5z" fill="url(#sg)"/><path d="M36 10q-12-2-20 0c-10 4-6 11 4 11 12-1 16 1 14 6-2 6-14 7-25 5" fill="none" stroke="#fff" stroke-width="6"/></svg>
  <button aria-label="中文"><svg width="22" height="22" fill="none" stroke="#1d78cc" stroke-width="3"><path d="M2 6.500h18v9H2zM11 0v21"/></svg></button>
  <button aria-label="标点"><svg width="18" height="18"><circle cx="4" cy="5" r="3" fill="none" stroke="#1d78cc" stroke-width="2"/><path d="M10 11q0-3 4-3 5 2 2 7-2 3-5 3 3-2 2-4-3 0-3-3z" fill="#1d78cc"/></svg></button>
  <button aria-label="表情"><svg width="24" height="24" fill="none" stroke="#1d78cc" stroke-width="2"><circle cx="12" cy="12" r="10.500"/><path d="M9 6v4M15 6v4M6 13q6 9 12 0" /></svg></button>
  <button aria-label="语音"><svg width="20" height="24"><rect x="6" y="0" width="8" height="14" rx="4" fill="#1d78cc"/><path d="M1 9q1 9 9 9t9-9M10 18v5M6 23h8" fill="none" stroke="#1d78cc" stroke-width="2"/></svg></button>
  <button aria-label="键盘"><svg width="24" height="19" fill="none" stroke="#1d78cc" stroke-width="2"><rect x="1" y="1" width="22" height="17" rx="2"/><path d="M4 6h16M4 10h16M4 14h3M8 14h9M18 14h2" stroke-dasharray="3 1"/></svg></button>
  <button aria-label="用户"><svg width="26" height="22" fill="#b5c1dc"><circle cx="9" cy="5" r="4.500"/><path d="M0 21q0-10 9-10t9 10z"/><path d="M11 11h15v11H11z"/><path d="M14 14v6M18 14h5v6h-5M18 14v3h5" fill="none" stroke="#fff"/></svg></button>
  <button aria-label="皮肤"><svg width="22" height="20"><path d="M6 0q5 4 10 0l6 4-3 5-2-1v12H5V8L3 9 0 4z" fill="#1d78cc"/></svg></button>
  <button aria-label="工具箱"><svg width="20" height="20" fill="#1d78cc"><rect width="9" height="9" rx="1"/><rect y="11" width="9" height="9" rx="1"/><rect x="11" y="11" width="9" height="9" rx="1"/><rect x="12" y="1" width="7" height="7" rx="2" fill="none" stroke="#1d78cc" stroke-width="2"/></svg></button>
</div>
</div>

<script>
// Rulers: the leftmost label's sign is scrolled out of view
let h='<span>60</span>',v='';
for(let n=-40;n<=360;n+=20)h+=`<span>${n}</span>`;
for(let n=200;n>=20;n-=20)v+=`<span><i>${n}</i></span>`;
document.getElementById('hr').innerHTML=h;
document.getElementById('vr').innerHTML=v;

// Structure chart: boxes, decision diamonds, calls and data couples
const nodes=[[1091,284,'超市收银系统'],[704,416,'登录系统'],[959,416,'管理商品'],[1232,416,'审核会员信息'],[1463,416,'盘存款项'],
[1042,573,'为非会员开卡'],[1290,573,'原价收银'],[1481,573,'打折收银'],[827,705,'免费开卡'],[1273,705,'收费开卡'],[827,837,'提交会员资料'],[1273,837,'打折收银']];
const calls=[[1133,334,746,416],[1133,334,1002,416],[1133,334,1273,416],[1133,334,1504,416],[1274,501,1084,573],[1274,501,1331,573],[1274,501,1522,573],
[1083,656,871,705],[1083,656,1314,705],[870,755,870,837],[870,755,1314,837],[1315,755,1315,837],[1315,755,870,837]];
// circle x, y, tip x, y, label, filled, label angle
const flows=[[811,389,977,351,'正确的账号密码'],[1075,360,1002,401,'增删改查',1],[1042,417,1129,353,'修改后的库存情况'],[1142,359,1232,416,'交易信息'],[1283,409,1208,362,'交易情况'],
[1240,343,1471,392,'本班次收银、开卡费用'],[1201,491,1106,532,'交易信息'],[1207,507,1109,547,'会员标准',1],[1134,566,1230,529,'交易情况'],[1142,580,1237,544,'会员资料'],[1145,600,1240,562,'开卡费用'],
[1270,515,1310,566,'交易信息'],[1339,564,1296,516,'交易情况'],[1463,540,1336,504,'交易情况'],[1326,524,1459,566,'会员标准',1],[1327,535,1455,576,'交易信息'],
[1037,644,911,669,'交易信息'],[1042,656,911,684,'花费满1000元',1],[927,705,1045,679,'会员资料'],[932,719,1047,692,'交易情况'],
[1260,656,1142,633,'开卡费用'],[1257,668,1133,646,'交易情况'],[1257,683,1125,657,'会员资料'],[1112,672,1261,705,'花费不满1000元',1],[1108,689,1257,721,'交易信息'],
[927,752,1047,776,'交易信息'],[1039,796,923,777,'交易情况'],[888,827,1005,805,'会员资料'],[861,826,861,763,'会员资料',0,-90],[1302,825,1301,764,'交易情况',0,90],[1330,762,1330,830,'交易信息',0,-90]];
const head=(x1,y1,x,y,l,w)=>{const a=Math.atan2(y-y1,x-x1)*180/Math.PI;return `<path d="M0 0L${-l} ${-w}V${w}z" transform="translate(${x} ${y}) rotate(${a})"/>`};
let s='';
for(const [a,b,c,d] of calls)s+=`<path d="M${a} ${b}L${c} ${d}" stroke="#000"/>`+head(a,b,c,d,10,3);
for(const [x,y] of [[1274,484],[1084,639]])s+=`<path d="M${x} ${y-16.5}l31 16.500-31 16.500-31-16.500z" fill="#fff" stroke="#000"/>`;
for(const [x,y,t] of nodes)s+=`<rect x="${x+.5}" y="${y+.5}" width="83" height="50" fill="#fff" stroke="#000"/><text class="node-t" x="${x+42}" y="${y+29}">${t}</text>`;
for(const [a,b,c,d,t,f,r] of flows){
  const L=Math.hypot(c-a,d-b),ux=(c-a)/L,uy=(d-b)/L,g=[...t].reduce((n,k)=>n+(k<'~'?5:10),0)/2,mx=(a+c)/2,my=(b+d)/2;
  let ang=Math.atan2(uy,ux)*180/Math.PI;if(ang>90)ang-=180;if(ang<-90)ang+=180;if(r!==undefined)ang=r;
  s+=`<path d="M${a+ux*3} ${b+uy*3}L${mx-ux*g} ${my-uy*g}M${mx+ux*g} ${my+uy*g}L${c} ${d}" stroke="#000"/>`
   +`<circle cx="${a}" cy="${b}" r="2.500" fill="${f?'#000':'#fff'}" stroke="#000"/>`+head(a,b,c,d,f?8:7,f?4:3)
   +`<text class="flow-t" transform="translate(${mx} ${my}) rotate(${ang})" y="4">${t}</text>`;
}
document.getElementById('dia').innerHTML=s;
</script>
</body>
</html>
